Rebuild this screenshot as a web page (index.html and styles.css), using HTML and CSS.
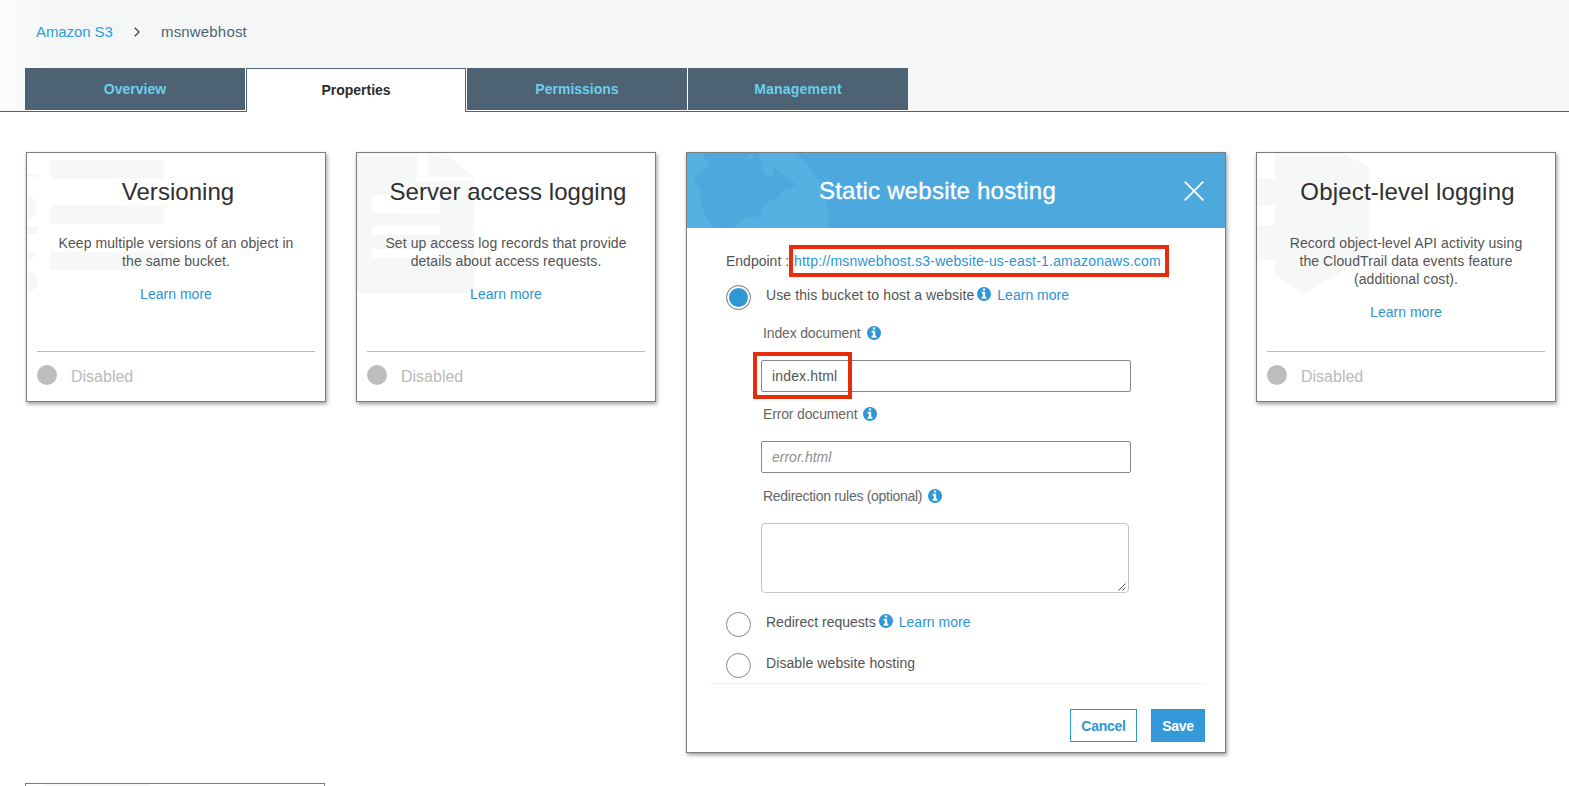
FILE: index.html
```html
<!DOCTYPE html>
<html lang="en">
<head>
<meta charset="utf-8">
<title>Amazon S3 - msnwebhost</title>
<link rel="stylesheet" href="styles.css">
</head>
<body>
<svg class="defs" aria-hidden="true">
  <symbol id="info" viewBox="0 128 1536 1536"><path d="M1024 1376v-160q0-14-9-23t-23-9h-96v-512q0-14-9-23t-23-9h-320q-14 0-23 9t-9 23v160q0 14 9 23t23 9h96v320h-96q-14 0-23 9t-9 23v160q0 14 9 23t23 9h448q14 0 23-9t9-23zm-128-896v-160q0-14-9-23t-23-9h-192q-14 0-23 9t-9 23v160q0 14 9 23t23 9h192q14 0 23-9t9-23zm640 416q0 209-103 385.5t-279.5 279.5-385.5 103-385.5-103-279.5-279.5-103-385.5 103-385.5 279.5-279.5 385.5-103 385.5 103 279.5 279.5 103 385.5z"/></symbol>
</svg>
<header class="top">
  <nav class="crumbs">
    <a class="crumb-root">Amazon S3</a>
    <svg class="chevron" viewBox="0 0 6 10"><path d="M.8.8 5 5 .8 9.2"/></svg>
    <span class="crumb-current">msnwebhost</span>
  </nav>
  <div class="tabs">
    <a class="tab">Overview</a>
    <a class="tab active">Properties</a>
    <a class="tab">Permissions</a>
    <a class="tab wide">Management</a>
  </div>
</header>
<main class="grid">
  <section class="card">
    <svg class="art" viewBox="0 0 150 145"><path d="M23 7h114v19H23zM23 52h114v19H23zM23 99h114v18H23zM0 21h11v3H0zM0 42q9 2 10 12t-10 12zM0 73h10v8H0zM0 99h10l-6 9H0zM0 117q11 4 11 12t-11 10z"/></svg>
    <h2 class="card-title">Versioning</h2>
    <p class="card-text">Keep multiple versions of an object in<br>the same bucket.</p>
    <a class="more">Learn more</a>
    <div class="status"><i class="dot"></i><span>Disabled</span></div>
  </section>
  <section class="card">
    <svg class="art" viewBox="0 0 150 145"><path fill-rule="evenodd" d="M0 0h60v28h57v112H0zM71 0h17l29 24H71zM15 42h68v18H15zM15 73h68v9H15zM15 96h68v9H15z"/></svg>
    <h2 class="card-title">Server access logging</h2>
    <p class="card-text">Set up access log records that provide<br>details about access requests.</p>
    <a class="more">Learn more</a>
    <div class="status"><i class="dot"></i><span>Disabled</span></div>
  </section>
  <section class="panel">
    <div class="panel-head">
      <svg class="globe" viewBox="0 0 150 75"><path class="sea" d="M0 0h109q32 27 33 75H0z"/><path class="land" d="M16 0h57l-2 5 6 5-4 6 5 6 8 2v-9l6 2 6 7 11 7-7 5-6 1-6 8-8 3-9 10 1 10-5-5-8 2-8 2-6 8 3 9H35l-8-8-5-7-6-13-3-11 2-8-8-7 5-10 10-7z"/><path class="sea" d="M61 2h5v4h-5z"/></svg>
      <h2 class="panel-title">Static website hosting</h2>
      <svg class="close" viewBox="0 0 20 20"><path d="M.7.7l18.6 18.6M19.3.7.7 19.3"/></svg>
    </div>
    <div class="panel-body">
      <div class="endpoint"><span class="ep-label">Endpoint :</span><a class="ep-link">http://msnwebhost.s3-website-us-east-1.amazonaws.com</a><i class="mark mark-url"></i></div>
      <div class="option first"><i class="radio on"></i><span class="opt-text use">Use this bucket to host a website</span><svg class="info"><use href="#info"/></svg><a class="opt-more">Learn more</a></div>
      <div class="fields">
        <label class="label">Index document<svg class="info"><use href="#info"/></svg></label>
        <div class="input"><span class="value">index.html</span><i class="mark mark-index"></i></div>
        <label class="label second">Error document<svg class="info"><use href="#info"/></svg></label>
        <div class="input"><span class="hint">error.html</span></div>
        <label class="label third">Redirection rules (optional)<svg class="info"><use href="#info"/></svg></label>
        <div class="area"><svg class="grip" viewBox="0 0 8 8"><path d="M.5 7.5l7-7M4.5 7.5l3-3"/></svg></div>
      </div>
      <div class="option redirect"><i class="radio"></i><span class="opt-text">Redirect requests</span><svg class="info"><use href="#info"/></svg><a class="opt-more">Learn more</a></div>
      <div class="option disable"><i class="radio"></i><span class="opt-text">Disable website hosting</span></div>
    </div>
    <div class="actions"><a class="btn cancel">Cancel</a><a class="btn save">Save</a></div>
  </section>
  <section class="card last">
    <svg class="art" viewBox="0 0 150 145"><path d="M18 0h68l26 14v90l-65 36-29-17v-16H0V72h18V52H0V28q0-8 6-10l12-3z"/><path class="gap" d="M0 15h18v11H0z"/></svg>
    <h2 class="card-title">Object-level logging</h2>
    <p class="card-text">Record object-level API activity using<br>the CloudTrail data events feature<br>(additional cost).</p>
    <a class="more">Learn more</a>
    <div class="status"><i class="dot"></i><span>Disabled</span></div>
  </section>
</main>
<section class="next"><svg class="next-art" viewBox="0 0 105 2"><path d="M0 0h105v2H0z"/></svg></section>
</body>
</html>
```
FILE: styles.css
```css
* { box-sizing: border-box; }
body { margin: 0; background: #fff; color: #545454; font: 14px/18px "Liberation Sans", Arial, sans-serif; }
h2, p { margin: 0; font-weight: 400; }
i { display: block; }
.defs { position: absolute; width: 0; height: 0; }

.top { height: 112px; padding: 22px 0 0 25px; border-bottom: 1px solid #4d6373; background: linear-gradient(90deg, #fbfcfc 0, #f8fafa 30px, #f5f7f7 55px); }
.crumbs { display: flex; height: 46px; padding-left: 11px; font-size: 15px; line-height: 20px; }
.crumb-root { width: 98px; color: #2d9bdb; letter-spacing: -.1px; }
.chevron { width: 6px; height: 10px; margin-top: 5px; fill: none; stroke: #444; stroke-width: 1.3; }
.crumb-current { margin-left: 21px; color: #4d6373; letter-spacing: .17px; }
.tabs { display: flex; width: 883px; gap: 1px; height: 44px; background: linear-gradient(#fff, #fff) 0 42px / 100% 1px no-repeat; }
.tab { width: 220px; height: 42px; background: #4d6373; color: #6bd0ee; font-weight: 700; line-height: 42px; text-align: center; box-shadow: 1px 0 #fff; }
.tab.active { height: 44px; background: #fff; color: #2b2b2b; border: solid #4d6373; border-width: 1px 1px 0; box-shadow: none; }
.tab.wide { letter-spacing: .2px; box-shadow: none; }

.grid { display: flex; align-items: flex-start; gap: 30px; height: 671px; padding: 40px 0 0 26px; }
.card, .panel { position: relative; flex: none; background: #fff; border: 1px solid #7b7d7e; box-shadow: 1px 2px 4px rgba(0, 0, 0, .4); }
.card { display: flex; flex-direction: column; width: 300px; height: 250px; padding: 24px 10px 0; text-align: center; }
.card > * { position: relative; }
.card > .art { position: absolute; left: 0; top: 0; width: 150px; height: 145px; fill: #f6f8f8; }
.art .gap { fill: #fff; }
.card-title { padding-left: 4px; color: #2f2f2f; font-size: 24px; line-height: 30px; letter-spacing: .04px; }
.last .card-title { padding-left: 3px; letter-spacing: .18px; }
.card-text { margin-top: 27px; letter-spacing: .08px; white-space: nowrap; }
.more { margin-top: 15px; }
.more, .opt-more, .ep-link { color: #2a95d4; letter-spacing: .02px; }
.status { display: flex; gap: 14px; margin-top: auto; height: 50px; padding-top: 13px; border-top: 1px solid #b9bbbb; color: #b9bbbb; font-size: 16px; line-height: 24px; }
.dot { width: 20px; height: 20px; border-radius: 50%; background: #bcbebe; }
.next { width: 300px; height: 3px; margin-left: 25px; padding-left: 18px; border: solid #7b7d7e; border-width: 1px 1px 0; }
.next-art { display: block; width: 105px; height: 2px; fill: #f6f8f8; }

.panel { width: 540px; height: 601px; }
.panel-head { position: relative; display: flex; justify-content: flex-end; height: 75px; padding: 23px 21px 0 0; background: #4da8dd; }
.globe { position: absolute; left: 0; top: 0; width: 150px; height: 75px; }
.sea { fill: #54b1e2; }
.land { fill: #4da8dd; }
.panel-title { position: relative; width: 365px; color: #fff; font-size: 24px; line-height: 30px; letter-spacing: .22px; -webkit-text-stroke: .35px #fff; }
.close { width: 20px; height: 20px; margin-top: 5px; fill: none; stroke: #fff; stroke-width: 1.7; }
.panel-body { margin: 0 20px 0 21px; padding: 24px 0 5px 18px; height: 456px; border-bottom: 1px solid #f2f3f3; }
.endpoint { position: relative; display: flex; height: 18px; }
.ep-label { width: 68px; white-space: nowrap; }
.ep-link { letter-spacing: .2px; }
.mark { position: absolute; border: 4px solid #e82c0c; }
.mark-url { left: 63px; top: -7px; width: 380px; height: 32px; }
.mark-index { left: -9px; top: -9px; width: 99px; height: 47px; }
.option { display: flex; height: 25px; padding-top: 1px; }
.radio { width: 25px; height: 25px; margin: -1px 15px 0 0; border: 1px solid #858789; border-radius: 50%; }
.radio.on { background: #2f97d6; box-shadow: inset 0 0 0 2px #fff; }
.opt-text.use { letter-spacing: .11px; }
.disable .opt-text { letter-spacing: .09px; }
.info { width: 14px; height: 14px; fill: #2f97d6; }
.option .info { margin: 1px 6px 0 3px; }
.first { margin-top: 15px; }
.redirect { margin-top: 19px; }
.disable { margin-top: 16px; }
.fields { padding-left: 35px; }
.label { display: flex; gap: 6px; margin-top: 14px; padding-left: 2px; letter-spacing: -.15px; color: #666; }
.label .info { margin-top: 2px; }
.label.second { margin-top: 13px; }
.label.third { letter-spacing: -.29px; }
.input { position: relative; width: 370px; height: 32px; margin-top: 18px; padding: 6px 10px; border: 1px solid #858789; border-radius: 2px; }
.value { letter-spacing: .15px; }
.hint { color: #8f8f8f; font-style: italic; }
.area { display: flex; align-items: flex-end; justify-content: flex-end; width: 368px; height: 70px; margin-top: 18px; padding: 1px 2px; border: 1px solid #c4c6c6; border-radius: 4px; }
.grip { width: 8px; height: 8px; fill: none; stroke: #555; stroke-width: 1; }
.actions { display: flex; justify-content: flex-end; gap: 14px; padding: 25px 20px 0 0; }
.btn { height: 33px; border: 1px solid #2f97d6; line-height: 32px; font-weight: 700; text-align: center; letter-spacing: -.25px; }
.cancel { width: 67px; color: #2f97d6; }
.save { width: 54px; background: #3399d8; color: #fff; }
```
